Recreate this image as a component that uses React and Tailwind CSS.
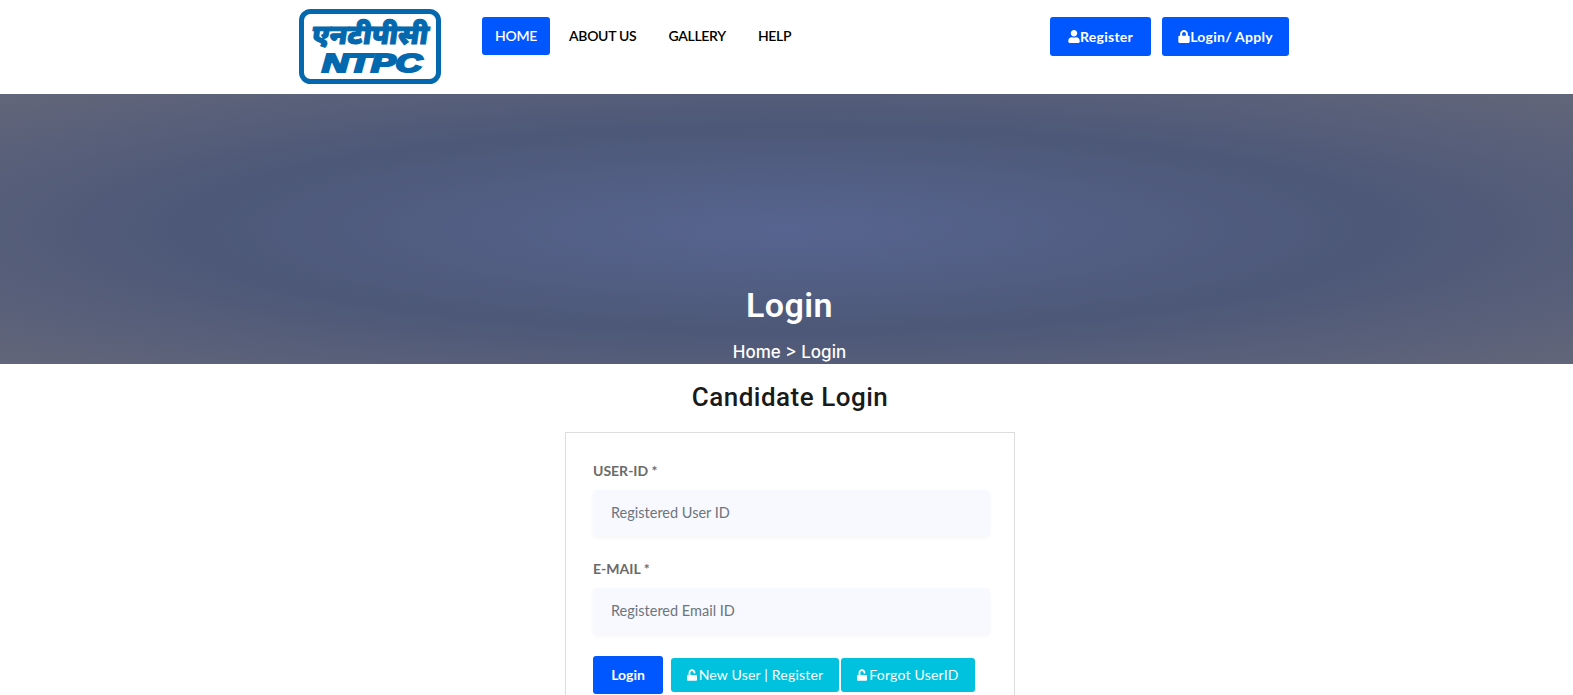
import React from "react";
import { FaUser, FaLock, FaUnlock } from "react-icons/fa";

const navLinks = ["ABOUT US", "GALLERY", "HELP"];

function Logo() {
  return (
    <svg width="142" height="75" viewBox="0 0 142 75" className="block">
      <rect x="2.5" y="2.5" width="137" height="70" rx="9" fill="#fff" stroke="#0368ae" strokeWidth="5" />
      <text
        x="71"
        y="35"
        textAnchor="middle"
        transform="translate(4 0) skewX(-8)"
        fontFamily="'Noto Sans', 'Noto Sans Devanagari', sans-serif"
        fontWeight="900"
        fontSize="27.5"
        stroke="#0368ae"
        strokeWidth="1"
        fill="#0368ae"
      >
        एनटीपीसी
      </text>
      <text
        x="73"
        y="63"
        textAnchor="middle"
        textLength="100"
        lengthAdjust="spacingAndGlyphs"
        fontFamily="'Liberation Sans', sans-serif"
        fontWeight="700"
        fontStyle="italic"
        fontSize="26"
        stroke="#0368ae"
        strokeWidth="2.2"
        fill="#0368ae"
      >
        NTPC
      </text>
    </svg>
  );
}

function Field({ label, placeholder }) {
  return (
    <div>
      <label className="block text-[14px] leading-[20px] font-bold text-[#6a6a6a]">{label}</label>
      <input
        placeholder={placeholder}
        className="mt-[9px] block w-[397px] h-[46px] px-[18px] pb-[2px] rounded-[4px] bg-[#f8f9fe] text-[14.5px] shadow-[0_2px_4px_rgba(0,0,0,0.04)] outline-none placeholder:text-[#6c757d]"
      />
    </div>
  );
}

export default function App() {
  return (
    <div className="h-[695px] overflow-hidden bg-white font-['Lato',sans-serif]">
      <header className="h-[94px] flex items-start pl-[299px]">
        <div className="pt-[9px]">
          <Logo />
        </div>
        <nav className="ml-[41px] mt-[17px] flex items-center text-[14px] font-semibold text-black -tracking-[0.3px]">
          <a className="h-[38px] w-[68px] mr-[3px] pb-[1px] flex items-center justify-center rounded-[3px] bg-[#0057ff] text-white">HOME</a>
          {navLinks.map((l) => (
            <a key={l} className="h-[38px] px-[16px] pb-[1px] flex items-center">
              {l}
            </a>
          ))}
        </nav>
        <div className="ml-auto mr-[284px] mt-[17px] flex gap-[11px] text-[14px] tracking-[0.25px] font-bold text-white">
          <a className="h-[39px] w-[101px] pb-[1px] flex items-center justify-center rounded-[3px] bg-[#0057ff]">
            <FaUser className="w-[12px] h-[13px]" />
            Register
          </a>
          <a className="h-[39px] w-[127px] pb-[1px] flex items-center justify-center rounded-[3px] bg-[#0057ff]">
            <FaLock className="w-[12px] h-[13px]" />
            Login/ Apply
          </a>
        </div>
      </header>

      <section className="h-[270px] pl-[6px] flex flex-col items-center text-white bg-[radial-gradient(ellipse_at_center,#57648f_0%,#4d5878_54%,#62667a_100%)]">
        <h1 className="mt-[192px] text-[34px] leading-[38px] font-semibold tracking-[0.4px] font-['Roboto',sans-serif]">Login</h1>
        <p className="mt-[18px] text-[17px] leading-[20px] font-['Inter',sans-serif] font-medium">Home &gt; Login</p>
      </section>

      <main className="pl-[7px] flex flex-col items-center">
        <h2 className="mt-[17px] text-[26px] leading-[32px] font-medium tracking-[0.5px] text-[#1a1a1a] font-['Roboto',sans-serif]">
          Candidate Login
        </h2>
        <div className="mt-[19px] w-[450px] border border-[#dddddd] pt-[28px] pl-[27px] pb-[20px]">
          <div className="flex flex-col gap-[23px]">
            <Field label="USER-ID *" placeholder="Registered User ID" />
            <Field label="E-MAIL *" placeholder="Registered Email ID" />
          </div>
          <div className="mt-[22px] flex items-center">
            <button className="w-[70px] h-[38px] pb-[1px] rounded-[3px] bg-[#0057ff] text-white text-[14px] font-bold">Login</button>
            <button className="ml-[8px] w-[168px] h-[34px] pb-[1px] flex items-center justify-center gap-[2px] rounded-[3px] bg-[#00c2de] text-white text-[14px] tracking-[0.2px]">
              <FaUnlock className="w-[10px] h-[12px]" />
              New User | Register
            </button>
            <button className="ml-[2px] w-[134px] h-[34px] pb-[1px] flex items-center justify-center gap-[2px] rounded-[3px] bg-[#00c2de] text-white text-[14px] tracking-[0.2px]">
              <FaUnlock className="w-[10px] h-[12px]" />
              Forgot UserID
            </button>
          </div>
        </div>
      </main>
    </div>
  );
}
